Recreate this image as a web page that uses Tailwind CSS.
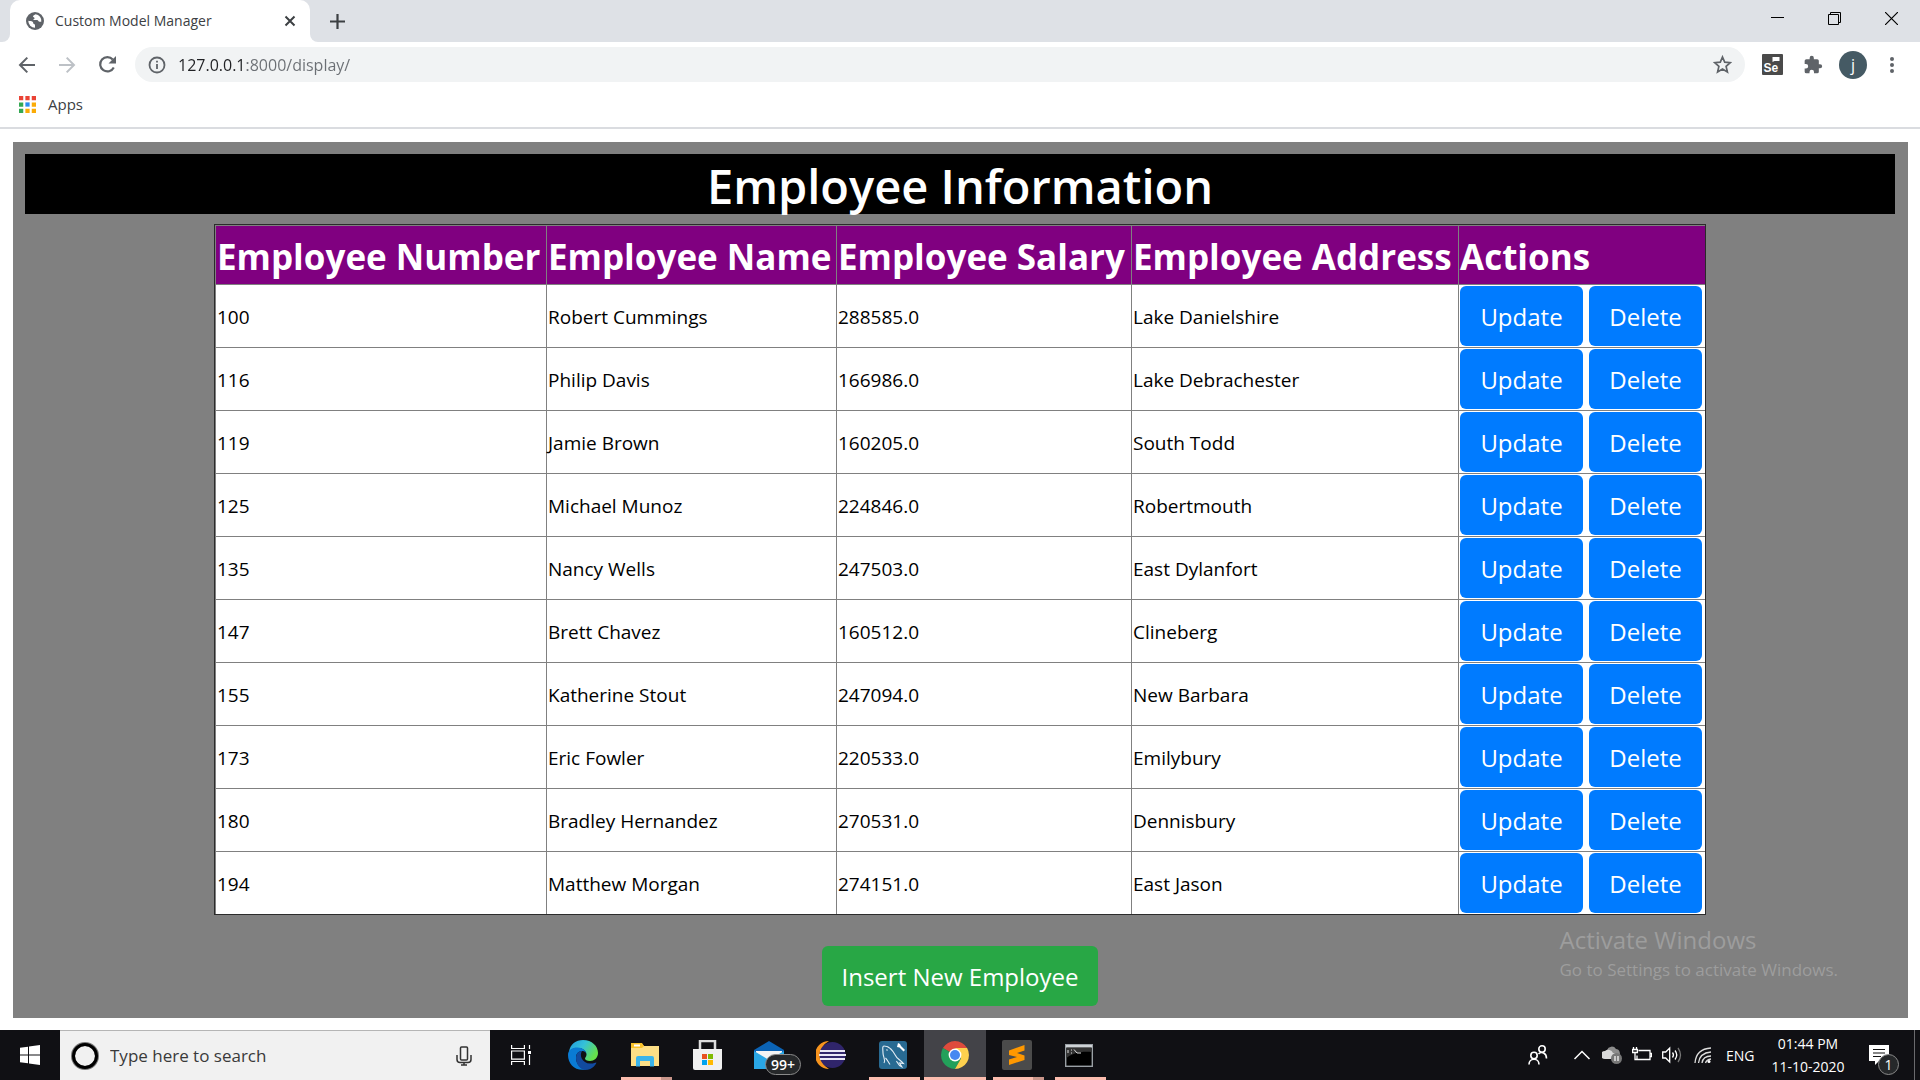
<!DOCTYPE html>
<html lang="en">
<head>
<meta charset="utf-8">
<meta name="viewport" content="width=device-width, initial-scale=1">
<title>Custom Model Manager</title>
<script src="https://cdn.jsdelivr.net/npm/@tailwindcss/browser@4"></script>
</head>
<body class="flex min-h-screen flex-col bg-white font-['Open_Sans','Noto_Sans',sans-serif] text-black">

<!-- Browser chrome -->
<header class="border-b-2 border-[#dadce0] text-[#3c4043]">
  <div class="flex h-[42px] bg-[#dee1e6]">
    <div class="w-[10px] bg-white"><div class="h-full rounded-br-lg bg-[#dee1e6]"></div></div>
    <div class="flex w-[300px] items-center rounded-t-[10px] bg-white pr-[14px] pl-4">
      <svg class="size-[18px]" viewBox="0 0 18 18"><circle cx="9" cy="9" r="9" fill="#5f6368"/><path d="M9.500 2.200c-.8 1-2.500.8-2.500 2.200 0 1 1.600.6 1.600 1.800 0 .9-1.300.7-1.300 1.700H11c1.500 0 1.400 1.800 2.500 1.800h1.800a6.600 6.600 0 0 0-5.800-7.500zM2.300 8.800c1.400.2 3.300.3 4.300 1 .9.700.3 1.600 1.200 2.100.8.400 1.200.2 1.200 1.200v2.600a6.700 6.700 0 0 1-6.700-6.900z" fill="#fff"/></svg>
      <span class="ml-[11px] flex-1 pb-0.5 text-[14px]">Custom Model Manager</span>
      <button aria-label="Close tab"><svg class="size-[12px]" viewBox="0 0 12 12" stroke="#3c4043" stroke-width="2" fill="none"><path d="M1.500 1.500l9 9M10.500 1.500l-9 9"/></svg></button>
    </div>
    <div class="w-[10px] bg-white"><div class="h-full rounded-bl-lg bg-[#dee1e6]"></div></div>
    <button aria-label="New tab" class="ml-[9px]"><svg class="size-[17px]" viewBox="0 0 17 17" stroke="#3c4043" stroke-width="2.200" fill="none"><path d="M1 8.500h15M8.500 1v15"/></svg></button>
    <div class="ml-auto flex">
      <button aria-label="Minimize" class="flex h-9 w-[57px] items-center justify-center"><svg class="size-[13px]" viewBox="0 0 13 13" fill="none" stroke="#000"><path d="M0 5.500h13"/></svg></button>
      <button aria-label="Restore" class="flex h-9 w-[57px] items-center justify-center"><svg class="size-[13px]" viewBox="0 0 13 13" fill="none" stroke="#000"><path d="M.5 2.500h10v10H.5zM2.500 2.500v-2h10v10h-2"/></svg></button>
      <button aria-label="Close" class="flex h-9 w-[57px] items-center justify-center"><svg class="size-[13px]" viewBox="0 0 13 13" fill="none" stroke="#000" stroke-width="1.200"><path d="M0 0l13 13M13 0L0 13"/></svg></button>
    </div>
  </div>

  <div class="flex h-[45px] items-center pl-[18px]">
    <button aria-label="Back"><svg class="size-[18px]" viewBox="0 0 18 18" fill="none" stroke="#5f6368" stroke-width="2"><path d="M17 9H2.500M9.300 1.600L2 9l7.300 7.400"/></svg></button>
    <button aria-label="Forward" class="ml-[22px]"><svg class="size-[18px]" viewBox="0 0 18 18" fill="none" stroke="#bdc1c6" stroke-width="2"><path d="M1 9h14.500M8.700 1.600L16 9l-7.300 7.400"/></svg></button>
    <button aria-label="Reload" class="ml-[22px]"><svg class="size-[19px]" viewBox="0 0 19 19"><path d="M15.800 12.500a7.200 7.200 0 1 1-1-8" fill="none" stroke="#5f6368" stroke-width="2.200"/><path d="M18 1v7.500h-7.500z" fill="#5f6368"/></svg></button>
    <div class="ml-[18px] flex h-[35px] flex-1 items-center rounded-full bg-[#f1f3f4] pr-[13px] pl-[13px]">
      <svg class="size-[18px]" viewBox="0 0 18 18" fill="none" stroke="#5f6368" stroke-width="1.800"><circle cx="9" cy="9" r="7.500"/><path d="M9 8v5M9 4.800v1.800"/></svg>
      <input type="text" aria-label="Address" value="127.0.0.1:8000/display/" class="ml-3 h-full min-w-0 flex-1 bg-[linear-gradient(to_right,#202124_69px,#6b6f74_69px)] bg-clip-text text-[16px] text-transparent outline-none">
      <button aria-label="Bookmark this page"><svg class="size-[19px]" viewBox="0 0 19 19" fill="none" stroke="#5f6368" stroke-width="1.700"><path d="M9.500 2l2.200 5.200 5.600.5-4.200 3.700 1.300 5.500-4.900-2.900-4.900 2.900 1.300-5.500L1.700 7.700l5.600-.5z"/></svg></button>
    </div>
    <button aria-label="Selenium IDE" class="ml-[17px]"><svg class="size-[21px]" viewBox="0 0 21 21"><rect width="21" height="21" rx="1" fill="#4a4a4a"/><path d="M10.500 3h7v4h-5l-2 1z" fill="#fff"/><text x="1.500" y="18" font-family="Liberation Sans" font-weight="700" font-size="12" fill="#fff">Se</text></svg></button>
    <button aria-label="Extensions" class="ml-5"><svg class="size-[20px]" viewBox="0 0 24 24" fill="#5f6368"><path d="M20.500 11H19V7a2 2 0 0 0-2-2h-4V3.500a2.500 2.500 0 0 0-5 0V5H4a2 2 0 0 0-2 2v3.800h1.500a2.700 2.700 0 0 1 0 5.400H2V20a2 2 0 0 0 2 2h3.800v-1.500a2.700 2.700 0 0 1 5.400 0V22H17a2 2 0 0 0 2-2v-4h1.500a2.500 2.500 0 0 0 0-5z"/></svg></button>
    <button aria-label="Profile" class="ml-4 flex size-7 items-center justify-center rounded-full bg-[#455a64] text-[16px] leading-none text-white">j</button>
    <button aria-label="Menu" class="mr-[26px] ml-[23px]"><svg class="h-[18px] w-1" viewBox="0 0 4 18" fill="#5f6368"><circle cx="2" cy="3" r="2"/><circle cx="2" cy="9" r="2"/><circle cx="2" cy="15" r="2"/></svg></button>
  </div>

  <nav class="flex h-10 items-center pb-1.5 pl-[19px]">
    <a href="#" class="flex items-center gap-3 text-[15px]">
      <svg class="size-[17px]" viewBox="0 0 16 16"><g fill="#ea4335"><path d="M0 0h4v4H0zM6 0h4v4H6zM12 0h4v4h-4z"/></g><path fill="#34a853" d="M0 6h4v4H0zM0 12h4v4H0z"/><path fill="#2a8cf0" d="M6 6h4v4H6z"/><path fill="#fbab05" d="M12 6h4v4h-4zM6 12h4v4H6zM12 12h4v4h-4z"/></svg>
      Apps
    </a>
  </nav>
</header>

<!-- Page content -->
<main class="relative mt-[13px] mr-3 mb-3 ml-[13px] flex flex-1 flex-col items-center bg-[#808080] py-3 pr-[13px] pl-3 text-[19px]">
  <h1 class="mb-[10px] h-[60px] w-full bg-black text-center text-[47px] leading-[64px] font-semibold text-white">Employee Information</h1>
  <div class="w-full max-w-[1492px] border border-[#2b2b2b] bg-white">
    <table class="w-full table-fixed border-separate border-spacing-0 text-left [&_td]:h-[63px] [&_td]:border-t [&_td]:border-l [&_td]:border-[#808080] [&_td]:px-px [&_td]:pt-0.5 [&_td:last-child]:pt-0 [&_td]:whitespace-nowrap [&_th]:h-[59px] [&_th]:border-t [&_th]:border-l [&_th]:border-[#808080] [&_th]:px-px [&_th]:pt-0.5 [&_th]:text-[35px] [&_th]:leading-none [&_th]:font-bold [&_th]:whitespace-nowrap [&_button]:h-[60px] [&_button]:rounded-md [&_button]:bg-[#007bff] [&_button]:pt-0.5 [&_button]:text-[24px] [&_button]:text-white [&_td>div]:flex [&_td>div]:gap-[6px]">
      <colgroup><col class="w-[331px]"><col class="w-[290px]"><col class="w-[295px]"><col class="w-[327px]"><col></colgroup>
      <thead class="bg-[#800080] text-white"><tr><th>Employee Number</th><th>Employee Name</th><th>Employee Salary</th><th>Employee Address</th><th>Actions</th></tr></thead>
      <tbody>
        <tr><td>100</td><td>Robert Cummings</td><td>288585.0</td><td>Lake Danielshire</td><td><div><button class="w-[123px]">Update</button><button class="w-[113px]">Delete</button></div></td></tr>
        <tr><td>116</td><td>Philip Davis</td><td>166986.0</td><td>Lake Debrachester</td><td><div><button class="w-[123px]">Update</button><button class="w-[113px]">Delete</button></div></td></tr>
        <tr><td>119</td><td>Jamie Brown</td><td>160205.0</td><td>South Todd</td><td><div><button class="w-[123px]">Update</button><button class="w-[113px]">Delete</button></div></td></tr>
        <tr><td>125</td><td>Michael Munoz</td><td>224846.0</td><td>Robertmouth</td><td><div><button class="w-[123px]">Update</button><button class="w-[113px]">Delete</button></div></td></tr>
        <tr><td>135</td><td>Nancy Wells</td><td>247503.0</td><td>East Dylanfort</td><td><div><button class="w-[123px]">Update</button><button class="w-[113px]">Delete</button></div></td></tr>
        <tr><td>147</td><td>Brett Chavez</td><td>160512.0</td><td>Clineberg</td><td><div><button class="w-[123px]">Update</button><button class="w-[113px]">Delete</button></div></td></tr>
        <tr><td>155</td><td>Katherine Stout</td><td>247094.0</td><td>New Barbara</td><td><div><button class="w-[123px]">Update</button><button class="w-[113px]">Delete</button></div></td></tr>
        <tr><td>173</td><td>Eric Fowler</td><td>220533.0</td><td>Emilybury</td><td><div><button class="w-[123px]">Update</button><button class="w-[113px]">Delete</button></div></td></tr>
        <tr><td>180</td><td>Bradley Hernandez</td><td>270531.0</td><td>Dennisbury</td><td><div><button class="w-[123px]">Update</button><button class="w-[113px]">Delete</button></div></td></tr>
        <tr><td>194</td><td>Matthew Morgan</td><td>274151.0</td><td>East Jason</td><td><div><button class="w-[123px]">Update</button><button class="w-[113px]">Delete</button></div></td></tr>
      </tbody>
    </table>
  </div>
  <button class="mt-[31px] h-[60px] w-[276px] rounded-md bg-[#28a745] pt-0.5 text-[24px] text-white">Insert New Employee</button>

  <!-- System watermark floats over the page -->
  <div class="pointer-events-none absolute right-[70px] bottom-[34px] text-[#9d9d9d]">
    <p class="text-[24px] leading-8">Activate Windows</p>
    <p class="text-[17px] leading-7">Go to Settings to activate Windows.</p>
  </div>
</main>

<!-- Taskbar -->
<footer class="flex h-[50px] bg-[#101014] text-[15px] text-white">
  <button aria-label="Start" class="flex w-[60px] items-center justify-center"><svg class="size-5" viewBox="0 0 20 20" fill="#fff"><path d="M0 2.800l8-1.100v7.800H0zM9 1.500L20 0v9.500H9zM0 10.500h8v7.800l-8-1.100zM9 10.500h11V20L9 18.500z"/></svg></button>
  <div class="flex w-[430px] items-center border-t border-[#b5b5b5] bg-[#f1f1f1] pr-[18px] pl-[11px]">
    <svg class="size-7" viewBox="0 0 28 28" fill="none"><circle cx="14" cy="14" r="12" stroke="#777" stroke-width="4"/><circle cx="14" cy="14" r="11.500" stroke="#000" stroke-width="3"/></svg>
    <input type="text" aria-label="Search" placeholder="Type here to search" class="ml-[11px] h-7 min-w-0 flex-1 bg-transparent text-[17px] leading-7 outline-none placeholder:text-[#3a3a3a]">
    <svg class="h-5 w-4" viewBox="0 0 16 20" fill="none" stroke="#333" stroke-width="1.500"><rect x="4.500" y="1" width="7" height="13" rx="1"/><path d="M1 9v4.500q0 3 3 3h8q3 0 3-3V9M8 16.500V19M5 19h6"/></svg>
  </div>
  <div class="flex [&_button]:relative [&_button]:flex [&_button]:w-[62px] [&_button]:items-center [&_button]:justify-center">
    <button aria-label="Task view"><svg class="size-5" viewBox="0 0 20 20" fill="none" stroke="#fff" stroke-width="1.200"><path d="M.6 0v3.500h12.800V0M.6 20v-3.500h12.800V20M.6 6h12.800v8.200H.6zM18.500 0v4M18.500 10v10"/><path d="M17 6h3v3h-3z" fill="#fff" stroke="none"/></svg></button>
    <button aria-label="Microsoft Edge"><svg class="size-[30px]" viewBox="0 0 30 30"><defs><linearGradient id="eg" x1="0" y1="0" x2="1" y2=".5"><stop offset="0" stop-color="#1f9be0"/><stop offset=".5" stop-color="#35c1d8"/><stop offset="1" stop-color="#66e04b"/></linearGradient></defs><path d="M1 12C2 4 8 0 15 0c9 0 15 6 15 13 0 5-4 8-8 8-3 0-5-1-5-2.500 0-1 1.500-1.500 1.500-4C18.500 11 15 8 10 8c-5 0-8 2-9 4z" fill="url(#eg)"/><path d="M0 15C0 10 4 7.500 9.500 7.500c5 0 9 3 9 7 0-2-2-3.500-4-3.500C9 11 8 15 8 18c0 6 5 11 10 11.500C7 31.500 0 24 0 15z" fill="#0a7bd4"/><path d="M8 18c0-4 2-7 6-7-3 4 0 13 9 12.500 3 0 5-1.500 5.300-1 .4.500-3 7.500-11.300 7.500C12 29.500 8 24 8 18z" fill="#114a9e"/></svg></button>
    <button aria-label="File Explorer"><svg class="h-6 w-7" viewBox="0 0 28 24"><path d="M0 1h11l2 2h15v20H0z" fill="#fddf86"/><path d="M0 0h11l2 3-2 2H0z" fill="#f9c22b"/><path d="M3 1.500h6v2H3z" fill="#fff"/><path d="M5 23.500V15q0-2 2-2h14q2 0 2 2v8.500h-4V18H9v5.500z" fill="#3bb4ea"/></svg><span class="absolute bottom-0 left-[7px] h-[3px] w-10 bg-[#fbbcae]"></span><span class="absolute bottom-0 left-[47px] h-[3px] w-[11px] bg-[#c9968b]"></span></button>
    <button aria-label="Microsoft Store"><svg class="h-[30px] w-[29px]" viewBox="0 0 29 30"><path d="M7 9V1h15v8" fill="none" stroke="#ddd" stroke-width="2.500"/><path d="M0 9h29v19q0 2-2 2H2q-2 0-2-2z" fill="#f0f0f0"/><path d="M9 14h5v5H9z" fill="#e8501e"/><path d="M15 14h5v5h-5z" fill="#7fba00"/><path d="M9 20h5v5H9z" fill="#00a4ef"/><path d="M15 20h5v5h-5z" fill="#ffb900"/></svg></button>
    <button aria-label="Mail"><svg class="h-7 w-[30px]" viewBox="0 0 30 28"><path d="M0 9L15 0l15 9v19H0z" fill="#0b63b5"/><path d="M2 10h26v8H2z" fill="#f4f4f4"/><path d="M0 10l15 9 15-9v18H0z" fill="#2aa7e6"/></svg><span class="absolute top-6 left-[27px] flex h-[21px] w-9 items-center justify-center rounded-full border border-[#8a8a8a] bg-[#26282a] text-[14px] font-semibold">99+</span></button>
    <button aria-label="Eclipse"><svg class="h-7 w-[30px]" viewBox="0 0 30 28"><path d="M13 0a14 14 0 0 0 0 28A16 16 0 0 1 13 0z" fill="#f7941e"/><circle cx="16.500" cy="14" r="13" fill="#30256b"/><path d="M4 9h25v2H4zM3 13h27v2H3zM4 17h25v2H4z" fill="#e9e7f5"/></svg></button>
    <button aria-label="MySQL Workbench"><svg class="size-[28px]" viewBox="0 0 28 28"><rect width="28" height="28" rx="3" fill="#286a92"/><path d="M5 22c2-3-1-6-1-10 0-3-1-7 1-7 6 0 9 5 11.500 9.500C18 18 21 18.500 24.500 22.500l-4-.5 2.500 4c-3.500-1-4-3.500-5.500-6M6.500 17c2 2 3 4.500 4.500 6.500M7.500 8.500l1 1" fill="none" stroke="#e5eef5" stroke-width="1.100"/><path d="M19 2l2 1 1 2 4 4-1.500 1.500-4-4-2.500-.5z" fill="#fff"/></svg><span class="absolute bottom-0 left-[7px] h-[3px] w-[51px] bg-[#fbbcae]"></span></button>
    <button aria-label="Google Chrome" class="bg-[#434348]"><svg class="size-[28px]" viewBox="0 0 28 28"><path d="M14 14L1.900 7A14 14 0 0 1 26.100 7H14z" fill="#de4b3c"/><path d="M14 14L1.900 7A14 14 0 0 0 14 28l6-10.500z" fill="#23a05a"/><path d="M14 7h12.100A14 14 0 0 1 14 28l6-10.500z" fill="#fdd04e"/><circle cx="14" cy="14" r="6.400" fill="#fff"/><circle cx="14" cy="14" r="5" fill="#4688f1"/></svg><span class="absolute inset-x-0 bottom-0 h-[3px] bg-[#fbbcae]"></span></button>
    <button aria-label="Sublime Text"><svg class="size-[30px]" viewBox="0 0 30 30"><rect width="30" height="30" rx="2" fill="#4b4b4b"/><path d="M7 10.500L22.500 5v5.500L15 13l7.500 2.500V20L7 25v-5.500l8-2.500-8-2z" fill="#ff9800"/></svg><span class="absolute bottom-0 left-[7px] h-[3px] w-10 bg-[#fbbcae]"></span><span class="absolute bottom-0 left-[47px] h-[3px] w-[11px] bg-[#c9968b]"></span></button>
    <button aria-label="Command Prompt"><svg class="h-[23px] w-[28px]" viewBox="0 0 28 23"><rect x=".7" y=".7" width="26.600" height="21.600" fill="#000" stroke="#9aa0a5" stroke-width="1.400"/><path d="M1 1h26v2.500H1z" fill="#cfd3d6"/><path d="M1.500 4h25v4C15 7 6 10 1.500 14z" fill="#333"/><path d="M3 6v3M6 6h1M6 9h1M9 5.500l3 3.500h4" stroke="#ddd" fill="none"/></svg><span class="absolute bottom-0 left-[7px] h-[3px] w-[51px] bg-[#fbbcae]"></span></button>
  </div>

  <div class="ml-auto flex items-center">
    <button aria-label="People"><svg class="size-5" viewBox="0 0 20 20" fill="none" stroke="#fff" stroke-width="1.600"><circle cx="14" cy="4" r="3.200"/><circle cx="6" cy="10.500" r="3.200"/><path d="M1 19.500c0-7 10-7 10 0M10.500 9c3-3 8-1 8 4.500"/></svg></button>
    <button aria-label="Show hidden icons" class="ml-[26px]"><svg class="h-[10px] w-4" viewBox="0 0 16 10" fill="none" stroke="#fff" stroke-width="1.500"><path d="M.5 9L8 1.500 15.500 9"/></svg></button>
    <svg class="ml-3 h-[18px] w-5" viewBox="0 0 20 18"><path d="M5 4a5 5 0 0 1 9-1c3 0 4 3 4 5l-6 5z" fill="#8d8d8d"/><path d="M3 13a4 4 0 0 1 0-8 5 5 0 0 1 8 2c3 0 4 3 2 6z" fill="#d8d8d8"/><circle cx="14.500" cy="12.500" r="5.500" fill="#777"/><path d="M13 10v5M16 10v5" stroke="#fff" stroke-width="1.200"/></svg>
    <svg class="ml-[10px] h-4 w-5" viewBox="0 0 20 16" fill="none" stroke="#fff" stroke-width="1.300"><path d="M6.500 3.500h11.500v9H5V8.500M18 6.500h1.500v3H18M1.500 0v2.500M4.500 0v2.500M.6 2.500h4.800v3H.6zM3 5.500v7h2"/></svg>
    <svg class="ml-[10px] size-5" viewBox="0 0 20 20" fill="none" stroke="#fff" stroke-width="1.300"><path d="M.7 7h3l4-4v14l-4-4h-3zM10.500 7.500q2 2.500 0 5M13 5.500q3.500 4.500 0 9"/><path d="M16 3q5 7 0 14" stroke="#777"/></svg>
    <svg class="ml-[12px] size-[18px]" viewBox="0 0 18 18" fill="none" stroke="#ddd" stroke-width="1.300"><path d="M1 17Q2 3 17 2M4.500 17Q5.500 7 17 6M8 17q1-7 9-7M11.500 17q1-3.500 5.500-4"/><circle cx="15" cy="15.500" r="1.500" fill="#fff" stroke="none"/></svg>
    <span class="ml-[14px] w-[30px] text-[14px]">ENG</span>
    <div class="ml-2 w-[88px] text-center text-[14px] leading-[23px] whitespace-nowrap">01:44 PM<br>11-10-2020</div>
    <button aria-label="Notifications" class="relative ml-[17px] h-5"><svg class="size-5" viewBox="0 0 20 20"><path d="M0 0h20v16H10l-4 4v-4H0z" fill="#fff"/><path d="M4 4.500h12M4 8h12M4 11.500h8" stroke="#111" stroke-width="1.200"/></svg><span class="absolute top-[9px] left-[9px] flex size-[21px] items-center justify-center rounded-full border border-[#8a8a8a] bg-[#26282a] text-[14px]">1</span></button>
    <span class="ml-[25px] h-full w-[6px] border-l border-[#6a6a6d]"></span>
  </div>
</footer>
</body>
</html>
